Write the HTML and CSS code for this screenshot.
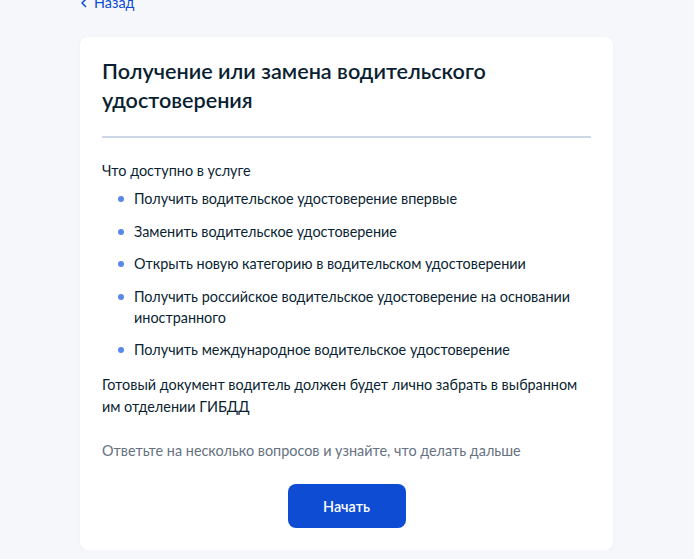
FILE: index.html
```html
<!DOCTYPE html>
<html lang="ru">
<head>
<meta charset="utf-8">
<link rel="stylesheet" href="styles.css">
</head>
<body>
<div class="page">
  <a class="back" href="#">
    <svg class="back-icon" width="8" height="10" viewBox="0 0 8 10"><path d="M5.5 1.5 L2 5 L5.5 8.5" fill="none" stroke="#0d4cd3" stroke-width="1.5" stroke-linecap="round" stroke-linejoin="round"/></svg>
    <span>Назад</span>
  </a>
  <div class="card">
    <h1 class="title">Получение или замена водительского удостоверения</h1>
    <div class="divider"></div>
    <p class="lead">Что доступно в услуге</p>
    <ul class="list">
      <li>Получить водительское удостоверение впервые</li>
      <li>Заменить водительское удостоверение</li>
      <li>Открыть новую категорию в водительском удостоверении</li>
      <li>Получить российское водительское удостоверение на основании иностранного</li>
      <li>Получить международное водительское удостоверение</li>
    </ul>
    <p class="note">Готовый документ водитель должен будет лично забрать в выбранном им отделении ГИБДД</p>
    <p class="hint">Ответьте на несколько вопросов и узнайте, что делать дальше</p>
    <div class="actions">
      <button class="btn" type="button">Начать</button>
    </div>
  </div>
</div>
</body>
</html>
```
FILE: styles.css
```css
* { box-sizing: border-box; }
html, body { margin: 0; padding: 0; }
body {
  background: #f5f7fb;
  font-family: Lato, "Noto Sans", sans-serif;
  color: #0b1f33;
  overflow: hidden;
}
.page {
  padding-left: 80px;
}
.back {
  display: flex;
  align-items: center;
  gap: 6px;
  margin-top: -7px;
  margin-left: 0;
  height: 20px;
  font-size: 14.4px;
  line-height: 20px;
  color: #0d4cd3;
  text-decoration: none;
}
.card {
  width: 533px;
  margin-top: 24px;
  background: #ffffff;
  border-radius: 8px;
  box-shadow: 0 1px 4px rgba(11, 31, 51, 0.04);
  padding: 20px 22px 22px;
}
.title {
  margin: 0;
  font-size: 21.6px;
  font-weight: 600;
  line-height: 29px;
  color: #0b1f33;
}
.divider {
  height: 2px;
  background: #ccd8e6;
  margin-top: 21px;
}
.lead {
  margin: 22px 0 0;
  font-size: 14.4px;
  line-height: 21px;
}
.list {
  list-style: none;
  margin: 7px 0 0;
  padding: 0 0 0 32px;
}
.list li {
  position: relative;
  font-size: 14.4px;
  line-height: 21px;
  margin-bottom: 11.5px;
}
.list li:last-child { margin-bottom: 0; }
.list li::before {
  content: "";
  position: absolute;
  left: -16px;
  top: 8px;
  width: 6px;
  height: 6px;
  border-radius: 50%;
  background: #5b87e8;
}
.note {
  margin: 14px 0 0;
  font-size: 14.4px;
  line-height: 22px;
}
.hint {
  margin: 22px 0 0;
  font-size: 14.4px;
  line-height: 21px;
  color: #66727f;
}
.actions {
  display: flex;
  justify-content: center;
  margin-top: 23px;
}
.btn {
  width: 118px;
  height: 44px;
  border: none;
  border-radius: 8px;
  background: #0d4cd3;
  color: #ffffff;
  font-family: Lato, "Noto Sans", sans-serif;
  font-size: 14.4px;
  font-weight: 600;
}
```
